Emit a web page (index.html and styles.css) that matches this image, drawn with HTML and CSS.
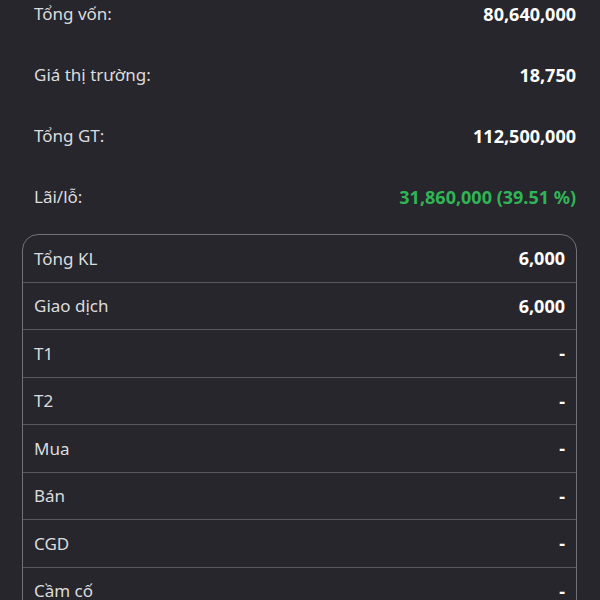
FILE: index.html
```html
<!DOCTYPE html>
<html lang="vi">
<head>
<meta charset="utf-8">
<link rel="stylesheet" href="styles.css">
</head>
<body>
<div class="page">
  <div class="summary">
    <div class="srow"><span class="label">Tổng vốn:</span><span class="value">80,640,000</span></div>
    <div class="srow"><span class="label">Giá thị trường:</span><span class="value">18,750</span></div>
    <div class="srow"><span class="label">Tổng GT:</span><span class="value">112,500,000</span></div>
    <div class="srow"><span class="label">Lãi/lỗ:</span><span class="value green">31,860,000 (39.51 %)</span></div>
  </div>
  <div class="table">
    <div class="trow"><span class="label">Tổng KL</span><span class="value">6,000</span></div>
    <div class="trow"><span class="label">Giao dịch</span><span class="value">6,000</span></div>
    <div class="trow"><span class="label">T1</span><span class="value">-</span></div>
    <div class="trow"><span class="label">T2</span><span class="value">-</span></div>
    <div class="trow"><span class="label">Mua</span><span class="value">-</span></div>
    <div class="trow"><span class="label">Bán</span><span class="value">-</span></div>
    <div class="trow"><span class="label">CGD</span><span class="value">-</span></div>
    <div class="trow"><span class="label">Cầm cố</span><span class="value">-</span></div>
  </div>
</div>
</body>
</html>
```
FILE: styles.css
```css
html, body {
  margin: 0;
  padding: 0;
  background: #27262c;
  height: 100%;
  overflow: hidden;
}
body {
  font-family: "Noto Sans", sans-serif;
  font-size: 17px;
  color: #e4e4e6;
}
.page {
  padding: 0 23px 0 22px;
  margin-top: -17px;
}
.summary {
  padding: 0 1px 0 12px;
}
.srow {
  height: 61px;
  display: flex;
  align-items: center;
  justify-content: space-between;
}
.label {
  color: #dcdcde;
}
.value {
  font-weight: 700;
  font-size: 18px;
  color: #ffffff;
}
.value.green {
  color: #2fb556;
}
.table {
  margin-top: 7px;
  border: 1.5px solid #717175;
  border-radius: 16px;
  overflow: hidden;
}
.trow {
  height: 46.5px;
  display: flex;
  align-items: center;
  justify-content: space-between;
  padding: 0 11px 0 11px;
  border-top: 1px solid #58585d;
}
.trow:first-child {
  border-top: none;
}
```
